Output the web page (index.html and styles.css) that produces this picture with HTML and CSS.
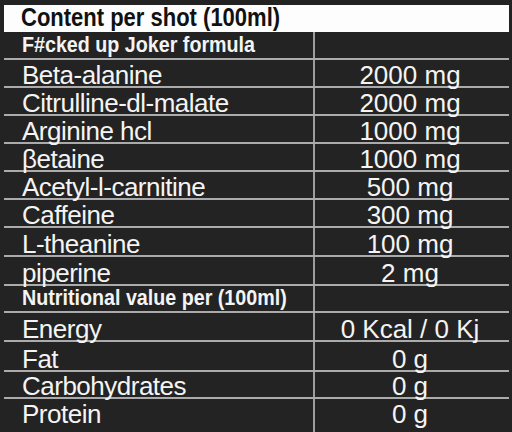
FILE: index.html
```html
<!DOCTYPE html>
<html>
<head>
<meta charset="utf-8">
<link rel="stylesheet" href="styles.css">
</head>
<body>
<div class="table">
  <div class="title"><span class="cond">Content per shot (100ml)</span></div>
  <div class="row section"><div class="name"><span class="cond">F#cked up Joker formula</span></div><div class="val"></div></div>
  <div class="row"><div class="name"><span>Beta-alanine</span></div><div class="val"><span>2000 mg</span></div></div>
  <div class="row"><div class="name"><span>Citrulline-dl-malate</span></div><div class="val"><span>2000 mg</span></div></div>
  <div class="row"><div class="name"><span>Arginine hcl</span></div><div class="val"><span>1000 mg</span></div></div>
  <div class="row"><div class="name"><span>βetaine</span></div><div class="val"><span>1000 mg</span></div></div>
  <div class="row"><div class="name"><span>Acetyl-l-carnitine</span></div><div class="val"><span>500 mg</span></div></div>
  <div class="row"><div class="name"><span>Caffeine</span></div><div class="val"><span>300 mg</span></div></div>
  <div class="row h27"><div class="name"><span>L-theanine</span></div><div class="val"><span>100 mg</span></div></div>
  <div class="row h27"><div class="name"><span>piperine</span></div><div class="val"><span>2 mg</span></div></div>
  <div class="row section h25"><div class="name"><span class="cond">Nutritional value per (100ml)</span></div><div class="val"></div></div>
  <div class="row h27"><div class="name"><span>Energy</span></div><div class="val"><span>0 Kcal / 0 Kj</span></div></div>
  <div class="row h28"><div class="name"><span>Fat</span></div><div class="val"><span>0 g</span></div></div>
  <div class="row h25"><div class="name"><span>Carbohydrates</span></div><div class="val"><span>0 g</span></div></div>
  <div class="row last"><div class="name"><span>Protein</span></div><div class="val"><span>0 g</span></div></div>
</div>
</body>
</html>
```
FILE: styles.css
```css
html, body {
  margin: 0;
  padding: 0;
  background: #232323;
  height: 100%;
  overflow: hidden;
}
.table {
  margin: 5px 0 0 4px;
  width: 505px;
  font-family: "Liberation Sans", Arial, sans-serif;
  color: #f4f4f4;
}
.title {
  background: #fdfdfd;
  color: #111;
  height: 27px;
  font-weight: bold;
  font-size: 26.5px;
  line-height: 1;
  padding: 0 0 2px 17px;
  box-sizing: border-box;
  display: flex;
  align-items: flex-end;
  white-space: nowrap;
}
.cond {
  display: inline-block;
  transform-origin: left bottom;
}
.title .cond { transform: scaleX(0.83); }
.section .cond { transform: scaleX(0.875); }
.row {
  display: grid;
  grid-template-columns: 309px 1fr;
  height: 26px;
  border-bottom: 2px solid #ababab;
}
.row.h25 { height: 25px; }
.row.h27 { height: 27px; }
.row.h28 { height: 28px; }
.row.last { border-bottom: none; height: 40px; }
.row > div {
  display: flex;
  align-items: flex-end;
  font-size: 26px;
  line-height: 1;
  white-space: nowrap;
}
.row > div > span {
  display: block;
  margin-bottom: -1.5px;
}
.row.last > div {
  align-items: flex-start;
  padding-top: 2px;
}
.name {
  padding-left: 18px;
  letter-spacing: -0.5px;
}
.val {
  border-left: 2px solid #9d9d9d;
  justify-content: center;
  padding-right: 4px;
}
.section .name {
  font-weight: bold;
  font-size: 22.5px;
  letter-spacing: 0;
  padding-bottom: 1.5px;
}
.row.section > div > span.cond {
  margin-bottom: 0;
}
```
